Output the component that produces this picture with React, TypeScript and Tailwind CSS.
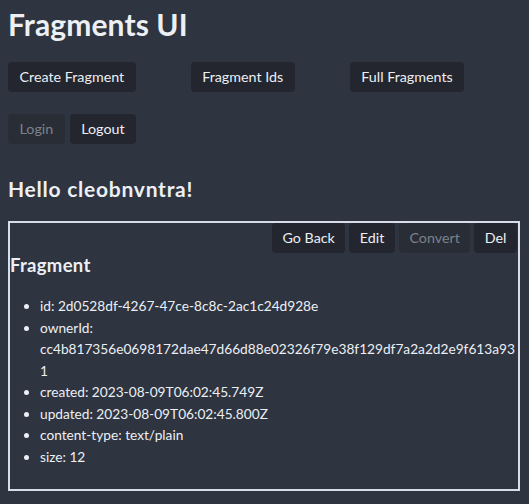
import React from "react";

const btn = "rounded-[4px] bg-[#23262e] px-[10.5px] h-[30px] text-[14.3px] text-[#eceff4] leading-none flex items-center";
const dis = "rounded-[4px] bg-[#292d36] px-[10.5px] h-[30px] text-[14.3px] text-[#7c828d] leading-none flex items-center";
const btnTop = "rounded-[4px] bg-[#23262e] px-[11.5px] h-[30px] text-[14.3px] text-[#eceff4] leading-none flex items-center";
const disTop = "rounded-[4px] bg-[#292d36] px-[11.5px] h-[30px] text-[14.3px] text-[#7c828d] leading-none flex items-center";

export default function App() {
  return (
    <div className="min-h-[504px] w-full bg-[#2e3440] text-[#eceff4] px-2 pt-[6px] pb-4" style={{ fontFamily: "Lato, 'Noto Sans', sans-serif" }}>
      <h1 className="text-[30px] font-bold leading-[36px] m-0 tracking-[0.1px]">Fragments UI</h1>
      <div className="flex gap-[55px] mt-[20px]">
        <button className={btnTop}>Create Fragment</button>
        <button className={btnTop}>Fragment Ids</button>
        <button className={btnTop}>Full Fragments</button>
      </div>
      <div className="flex gap-[5px] mt-[22px]">
        <button className={disTop}>Login</button>
        <button className={btnTop}>Logout</button>
      </div>
      <h2 className="text-[21px] font-bold leading-[24px] mt-[33px] tracking-[0.75px]">Hello cleobnvntra!</h2>
      <div className="mt-[20px] border-2 border-[#d8dee9] h-[270px] w-[512px] flex flex-col">
        <div className="flex justify-end gap-[4px] pr-[1px]">
          <button className={btn}>Go Back</button>
          <button className={btn}>Edit</button>
          <button className={dis}>Convert</button>
          <button className={btn}>Del</button>
        </div>
        <h3 className="text-[18.5px] font-bold leading-[22px] mt-[1px] pl-[0px] tracking-[0.3px]">Fragment</h3>
        <ul className="list-disc pl-[30px] mt-[19px] text-[13.7px] leading-[21.5px] pr-0 break-words">
          <li>id: 2d0528df-4267-47ce-8c8c-2ac1c24d928e</li>
          <li>ownerId: cc4b817356e0698172dae47d66d88e02326f79e38f129df7a2a2d2e9f613a931</li>
          <li>created: 2023-08-09T06:02:45.749Z</li>
          <li>updated: 2023-08-09T06:02:45.800Z</li>
          <li>content-type: text/plain</li>
          <li>size: 12</li>
        </ul>
      </div>
    </div>
  );
}
